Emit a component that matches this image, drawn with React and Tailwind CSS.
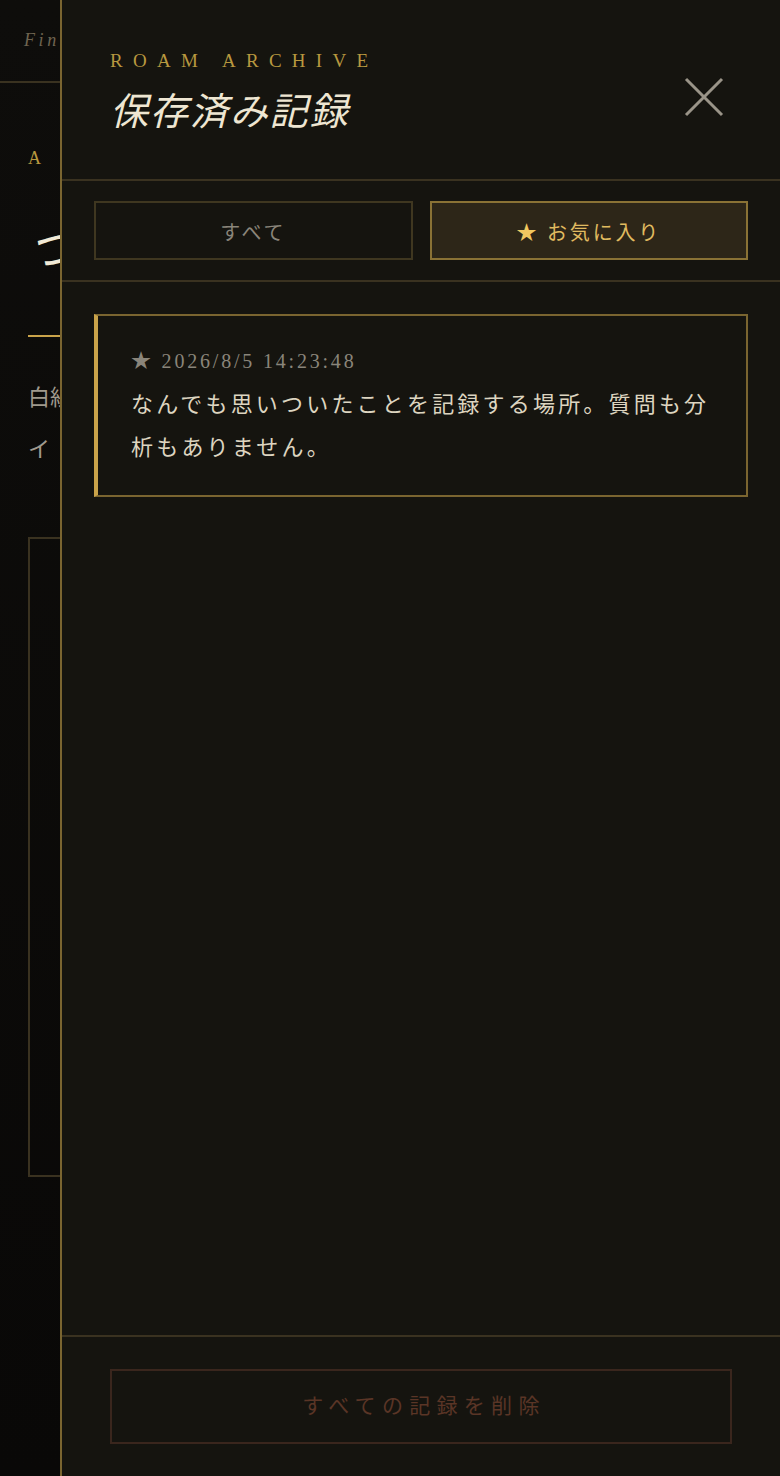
import React, { useState } from "react";

const serif = "font-['Liberation_Serif','Noto_Sans_CJK_JP',serif]";

// one saved entry
const records = [
  {
    id: 1,
    fav: true,
    date: "2026/8/5 14:23:48",
    text: "なんでも思いついたことを記録する場所。質問も分析もありません。",
  },
];

const Background = () => (
  <div className="min-h-[1476px] bg-gradient-to-b from-[#0e0d0b] to-[#090807]">
    <div className="h-[83px] border-b-2 border-[#3a3220] flex items-center px-6">
      <span className="italic text-[18px] tracking-[0.2em] text-[#6f6450]">Fin</span>
    </div>
    <div className="px-7 pt-[62px]">
      <div className="text-[18px] text-[#b8983f] tracking-[0.4em]">A</div>
      <div className="mt-[54px] text-[48px] leading-none text-[#f2ead6] italic">つれづれ</div>
      <div className="mt-[61px] h-[2px] w-[80px] bg-[#c9a34a]" />
      <p className="mt-[35px] text-[22px] leading-[52px] text-[#a09a8e]">
        白紙
        <br />
        イ
      </p>
      <div className="mt-[61px] h-[640px] border-2 border-[#3a3220]" />
    </div>
  </div>
);

const Drawer = () => {
  const [tab, setTab] = useState("fav");

  const tabClass = (key) =>
    tab === key
      ? "h-[59px] pt-[4px] border-2 border-[#8a7235] bg-[#2d2618] text-[20px] tracking-[0.14em] text-[#e0bb60]"
      : "h-[59px] pt-[4px] border-2 border-[#3f3720] text-[20px] tracking-[0.14em] text-[#8a857a]";

  return (
    <div className="absolute top-0 bottom-0 right-0 left-[60px] flex flex-col bg-[#15140f] border-l-2 border-[#7a6530]">
      {/* header */}
      <div className="h-[181px] border-b-2 border-[#3a3220] flex items-start justify-between pl-12 pr-[56px] pt-[51px]">
        <div>
          <div className="text-[19px] leading-none tracking-[0.54em] text-[#b8983f]">ROAM ARCHIVE</div>
          <h2 className="mt-[23px] text-[38px] leading-none italic tracking-[0.05em] text-[#eee6d2]">
            保存済み記録
          </h2>
        </div>
        <button className="mt-[26px]">
          <svg width="40" height="40" viewBox="0 0 40 40">
            <path d="M2 2 L38 38 M38 2 L2 38" stroke="#9a9488" strokeWidth="3" />
          </svg>
        </button>
      </div>

      {/* tabs */}
      <div className="border-b-2 border-[#3a3220] px-8 py-5 grid grid-cols-2 gap-[17px]">
        <button onClick={() => setTab("all")} className={tabClass("all")}>
          すべて
        </button>
        <button onClick={() => setTab("fav")} className={tabClass("fav")}>
          <span className="text-[#f0c860]">★</span> お気に入り
        </button>
      </div>

      {/* list */}
      <div className="flex-1 px-8 pt-8 flex flex-col gap-4">
        {records.map((r) => (
          <div
            key={r.id}
            className="border-2 border-l-4 border-[#7a6530] border-l-[#c9a34a] pl-[33px] pr-8 pt-[31px] pb-[26px]"
          >
            <div className="text-[20px] leading-[28px] tracking-[0.14em] text-[#8a857a]">
              {r.fav && "★ "}
              {r.date}
            </div>
            <p className="mt-[8px] text-[22px] leading-[43px] tracking-[0.145em] text-[#ddd5c0]">{r.text}</p>
          </div>
        ))}
      </div>

      {/* footer */}
      <div className="border-t-2 border-[#3a3220] px-12 pt-[32px] pb-[32px]">
        <button className="w-full h-[75px] pl-[6px] border-2 border-[#3a261d] text-[21px] tracking-[0.3em] text-[#5a3526]">
          すべての記録を削除
        </button>
      </div>
    </div>
  );
};

export default function App() {
  return (
    <div className={`relative h-[1476px] overflow-hidden ${serif}`}>
      <Background />
      <Drawer />
    </div>
  );
}
